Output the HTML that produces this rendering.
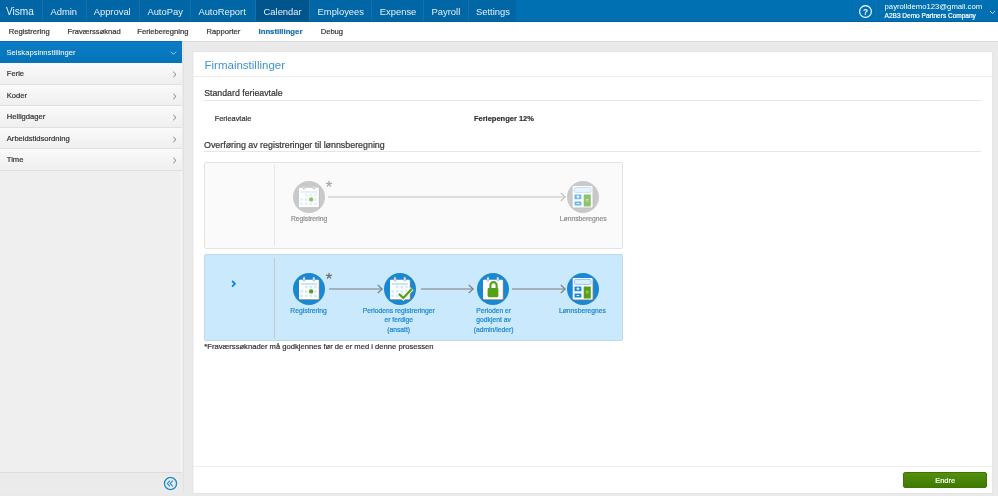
<!DOCTYPE html>
<html><head><meta charset="utf-8">
<style>
*{margin:0;padding:0;box-sizing:border-box}
html,body{width:998px;height:496px;overflow:hidden;background:#eaeaea;font-family:"Liberation Sans",sans-serif;position:relative}
.a{position:absolute;white-space:nowrap;line-height:1}
#top{position:absolute;left:0;top:0;width:998px;height:22px;background:#0070b3;border-bottom:1px solid #00619c}
.nv{position:absolute;top:6.8px;font-size:9.4px;color:#e6f0f8;line-height:1}
.dv{position:absolute;top:0;width:1px;height:21px;background:#1570ab}
#sub{position:absolute;left:0;top:22px;width:998px;height:20px;background:#fff;border-bottom:1px solid #dadada}
.sn{position:absolute;top:5.9px;font-size:7.6px;color:#333;line-height:1}
#side{position:absolute;left:0;top:41px;width:182px;height:452px;background:#efefef;border-right:1px solid #f8f8f8}
.row{position:absolute;left:0;width:182px;background:linear-gradient(#fafafa,#efefef);border-bottom:1px solid #e0e0e0}
.rt{position:absolute;left:6.8px;font-size:7.6px;color:#333;line-height:1}
#panel{position:absolute;left:193px;top:52px;width:799px;height:441px;background:#fff;border-left:1px solid #f4f4f4;box-shadow:0 0 1px rgba(0,0,0,0.12)}
.hl{position:absolute;height:1px;background:#e6e6e6}
.sn,.rt,.pt{-webkit-text-stroke-width:0.2px}
.lbl{position:absolute;font-size:6.75px;line-height:9.5px;text-align:center;white-space:nowrap}
</style></head><body>
<div id="root" style="position:absolute;left:0;top:0;width:998px;height:496px;overflow:hidden;will-change:transform">
<div id="top">
  <div class="a" style="left:0;top:0;width:516px;height:21px;background:#0066a6"></div>
  <div class="a" style="left:255.5px;top:0;width:54px;height:21px;background:#00558c"></div>
  <span class="nv" style="left:6px;top:7px;font-size:10.1px">Visma</span>
  <div class="dv" style="left:42px"></div>
  <span class="nv" style="left:50.5px">Admin</span>
  <div class="dv" style="left:86px"></div>
  <span class="nv" style="left:93.7px">Approval</span>
  <div class="dv" style="left:139px"></div>
  <span class="nv" style="left:147.4px">AutoPay</span>
  <div class="dv" style="left:190px"></div>
  <span class="nv" style="left:198.4px">AutoReport</span>
  <div class="dv" style="left:255px"></div>
  <span class="nv" style="left:263.6px">Calendar</span>
  <div class="dv" style="left:309px"></div>
  <span class="nv" style="left:317.6px">Employees</span>
  <div class="dv" style="left:371px"></div>
  <span class="nv" style="left:379.8px">Expense</span>
  <div class="dv" style="left:423px"></div>
  <span class="nv" style="left:431.6px">Payroll</span>
  <div class="dv" style="left:468px"></div>
  <span class="nv" style="left:476px">Settings</span>
  <div class="dv" style="left:854px"></div>
  <svg class="a" style="left:858px;top:3.7px" width="15" height="15" viewBox="0 0 15 15"><circle cx="7.5" cy="7.5" r="5.9" fill="none" stroke="#fff" stroke-width="1.15"/><text x="7.5" y="10.5" font-size="8.3" font-weight="bold" text-anchor="middle" fill="#fff" font-family="Liberation Sans">?</text></svg>
  <div class="dv" style="left:876px"></div>
  <span class="a" style="left:884.6px;top:3.3px;font-size:7.7px;color:#fff">payrolldemo123@gmail.com</span>
  <span class="a" style="left:884.6px;top:13px;font-size:6.52px;color:#fff;-webkit-text-stroke-width:0.2px">A2B3 Demo Partners Company</span>
  <svg class="a" style="left:989px;top:10px" width="7" height="5" viewBox="0 0 7 5"><path d="M1 1 L3.5 3.5 L6 1" fill="none" stroke="#dfeaf3" stroke-width="0.9"/></svg>
</div>
<div id="sub">
  <span class="sn" style="left:8.7px">Registrering</span>
  <span class="sn" style="left:67.6px">Fraværssøknad</span>
  <span class="sn" style="left:137.3px">Ferieberegning</span>
  <span class="sn" style="left:206.5px">Rapporter</span>
  <span class="sn" style="left:258.5px;font-weight:bold;color:#1a6fb0;font-size:7.75px">Innstillinger</span>
  <span class="sn" style="left:320.7px">Debug</span>
</div>
<div id="side">
  <div class="a" style="left:0;top:0;width:182px;height:22px;background:linear-gradient(#0a7dc6,#0673b9);border-top:1px solid #036fb5"></div>
  <span class="a" style="left:6.5px;top:7.6px;font-size:7.64px;color:#fff">Selskapsinnstillinger</span>
  <svg class="a" style="left:169px;top:8.5px" width="9" height="6" viewBox="0 0 9 6"><path d="M1.8 1.6 L4.5 4.3 L7.2 1.6" fill="none" stroke="#cfe3f3" stroke-width="0.8"/></svg>
  <div class="row" style="top:22px;height:21.5px"><span class="rt" style="top:7.4px">Ferie</span><svg class="a" style="left:171px;top:8px" width="7" height="7" viewBox="0 0 7 7"><path d="M2.2 0.8 L5 3.5 L2.2 6.2" fill="none" stroke="#666" stroke-width="0.8"/></svg></div>
  <div class="row" style="top:43.5px;height:21.5px"><span class="rt" style="top:7.4px">Koder</span><svg class="a" style="left:171px;top:8px" width="7" height="7" viewBox="0 0 7 7"><path d="M2.2 0.8 L5 3.5 L2.2 6.2" fill="none" stroke="#666" stroke-width="0.8"/></svg></div>
  <div class="row" style="top:65px;height:21.5px"><span class="rt" style="top:7.4px">Helligdager</span><svg class="a" style="left:171px;top:8px" width="7" height="7" viewBox="0 0 7 7"><path d="M2.2 0.8 L5 3.5 L2.2 6.2" fill="none" stroke="#666" stroke-width="0.8"/></svg></div>
  <div class="row" style="top:86.5px;height:21.5px"><span class="rt" style="top:7.4px">Arbeidstidsordning</span><svg class="a" style="left:171px;top:8px" width="7" height="7" viewBox="0 0 7 7"><path d="M2.2 0.8 L5 3.5 L2.2 6.2" fill="none" stroke="#666" stroke-width="0.8"/></svg></div>
  <div class="row" style="top:108px;height:21.5px"><span class="rt" style="top:7.4px">Time</span><svg class="a" style="left:171px;top:8px" width="7" height="7" viewBox="0 0 7 7"><path d="M2.2 0.8 L5 3.5 L2.2 6.2" fill="none" stroke="#666" stroke-width="0.8"/></svg></div>
  <div class="a" style="left:0;top:431px;width:182px;height:21px;background:#ebebeb;border-top:1px solid #dcdcdc"></div>
  <svg class="a" style="left:162px;top:434px" width="17" height="17" viewBox="0 0 17 17"><circle cx="8.5" cy="8.5" r="7.4" fill="none" stroke="#fdf3ea" stroke-width="1"/><circle cx="8.5" cy="8.5" r="6.1" fill="none" stroke="#1a8ad4" stroke-width="1.4"/><path d="M7.9 5.7 L5.4 8.5 L7.9 11.3 M10.8 5.7 L8.3 8.5 L10.8 11.3" fill="none" stroke="#1a8ad4" stroke-width="1.1"/></svg>
</div>
<div class="a" style="left:183px;top:42px;width:1px;height:451px;background:#e2e2e2"></div>
<div id="panel"></div>
<span class="a" style="left:204.5px;top:59.7px;font-size:11.5px;color:#3f92d2">Firmainstillinger</span>
<div class="hl" style="left:193px;top:76px;width:799px;background:#ececec"></div>
<span class="a pt" style="left:204.2px;top:89.2px;font-size:8.77px;color:#333">Standard ferieavtale</span>
<div class="hl" style="left:204px;top:100px;width:777px"></div>
<span class="a pt" style="left:214.7px;top:115.3px;font-size:7.4px;color:#333">Ferieavtale</span>
<span class="a pt" style="left:473.9px;top:114.9px;font-size:7.5px;color:#333;font-weight:bold">Feriepenger 12%</span>
<span class="a pt" style="left:204px;top:141.1px;font-size:8.87px;color:#333">Overføring av registreringer til lønnsberegning</span>
<div class="hl" style="left:204px;top:151px;width:777px"></div>
<!-- box 1 -->
<div class="a" style="left:204px;top:162px;width:418.5px;height:86.5px;background:#fafafa;border:1px solid #e3e3e3;border-radius:2px"></div>
<div class="a" style="left:274px;top:165px;width:1px;height:81px;background:#e6e6e6"></div>
<!-- box 2 -->
<div class="a" style="left:204px;top:254px;width:418.5px;height:87px;background:#cbe9fd;border:1px solid #c0d8e8;border-radius:2px"></div>
<div class="a" style="left:274px;top:257.5px;width:1px;height:81.5px;background:#bfc9cf"></div>
<svg class="a" style="left:230px;top:279px" width="7" height="10" viewBox="0 0 7 10"><path d="M2.1 1.9 L4.9 4.8 L2.1 7.7" fill="none" stroke="#0b7fd0" stroke-width="1.7"/></svg>
<svg class="a" style="left:293.2px;top:180.7px" width="32" height="32" viewBox="0 0 32 32"><circle cx="16" cy="16" r="16" fill="#c9c9c9"/><rect x="6.9" y="7.5" width="19.8" height="19.6" rx="0.6" fill="#bdbdbd"/><rect x="6" y="6.7" width="19.8" height="19.5" rx="0.6" fill="#fff"/><rect x="9.8" y="3.7" width="2.4" height="4.8" rx="1.2" fill="#bfbfbf"/><rect x="10.600000000000001" y="4.6" width="0.8" height="3.2" rx="0.4" fill="#fff"/><rect x="19.6" y="3.7" width="2.4" height="4.8" rx="1.2" fill="#bfbfbf"/><rect x="20.400000000000002" y="4.6" width="0.8" height="3.2" rx="0.4" fill="#fff"/><rect x="7.8" y="10.4" width="16.3" height="1.1" fill="#cce4f6"/><rect x="12.0" y="12.7" width="2.6" height="2.5" fill="#dfeffb"/><rect x="16.6" y="12.7" width="2.6" height="2.5" fill="#dfeffb"/><rect x="21.2" y="12.7" width="2.6" height="2.5" fill="#dfeffb"/><rect x="7.4" y="17.2" width="2.6" height="2.5" fill="#dfeffb"/><rect x="12.0" y="17.2" width="2.6" height="2.5" fill="#dfeffb"/><rect x="16.6" y="17.2" width="2.6" height="2.5" fill="#dfeffb"/><rect x="21.2" y="17.2" width="2.6" height="2.5" fill="#dfeffb"/><rect x="7.4" y="21.6" width="2.6" height="2.5" fill="#dfeffb"/><rect x="12.0" y="21.6" width="2.6" height="2.5" fill="#dfeffb"/><rect x="16.6" y="21.6" width="2.6" height="2.5" fill="#dfeffb"/><rect x="21.2" y="21.6" width="2.6" height="2.5" fill="#dfeffb"/><circle cx="18.1" cy="18.4" r="2.2" fill="#8dc46b"/></svg>
<svg class="a" style="left:567.3px;top:180.7px" width="32" height="32" viewBox="0 0 32 32"><circle cx="16" cy="16" r="16" fill="#c9c9c9"/><rect x="6.6" y="5.9" width="19.8" height="21.3" rx="0.8" fill="#bdbdbd"/><rect x="5.7" y="5.1" width="19.9" height="21.4" rx="0.8" fill="#fff"/><rect x="7.4" y="6.5" width="16.6" height="4.9" rx="1" fill="#e6f3fc" stroke="#b7dcf4" stroke-width="0.8"/><rect x="7.5" y="13.5" width="6.9" height="4.7" rx="0.5" fill="#6ab8ea"/><rect x="7.5" y="20.4" width="6.9" height="4.2" rx="0.5" fill="#6ab8ea"/><path d="M9.4 15.85 H12.5 M10.95 14.3 V17.4" stroke="#fff" stroke-width="1"/><path d="M9.6 22.5 H12.3" stroke="#fff" stroke-width="0.9"/><rect x="16.7" y="13.5" width="7.1" height="11.9" rx="0.5" fill="#8dc46b"/><path d="M18.7 18.4 H21.6 M18.7 20.0 H21.6" stroke="#d8ecc8" stroke-width="0.8"/></svg>
<svg class="a" style="left:324.1px;top:178.9px" width="10" height="10" viewBox="0 0 10 10"><path d="M5 5 L5.00 2.30 M5 5 L7.57 4.17 M5 5 L2.43 4.17 M5 5 L6.59 7.18 M5 5 L3.41 7.18 " stroke="#a5a5a5" stroke-width="1.25" stroke-linecap="round"/></svg>
<svg class="a" style="left:328px;top:191.5px" width="238" height="10" viewBox="0 0 238 10"><path d="M0 5 H237.3" stroke="#c2c2c2" stroke-width="1.1"/><path d="M232.8 1 L237.2 5 L232.8 9" fill="none" stroke="#c2c2c2" stroke-width="1.1"/></svg>
<div class="a pt" style="left:249.2px;width:120px;top:215.7px;font-size:6.75px;color:#8f8f8f;text-align:center">Registrering</div>
<div class="a pt" style="left:523.3px;width:120px;top:215.7px;font-size:6.75px;color:#8f8f8f;text-align:center">Lønnsberegnes</div>
<svg class="a" style="left:292.9px;top:272.6px" width="32" height="32" viewBox="0 0 32 32"><circle cx="16" cy="16" r="16" fill="#1a87d1"/><rect x="6.9" y="7.5" width="19.8" height="19.6" rx="0.6" fill="#8a8076"/><rect x="6" y="6.7" width="19.8" height="19.5" rx="0.6" fill="#fff"/><rect x="9.8" y="3.7" width="2.4" height="4.8" rx="1.2" fill="#a4bccd"/><rect x="10.600000000000001" y="4.6" width="0.8" height="3.2" rx="0.4" fill="#fff"/><rect x="19.6" y="3.7" width="2.4" height="4.8" rx="1.2" fill="#a4bccd"/><rect x="20.400000000000002" y="4.6" width="0.8" height="3.2" rx="0.4" fill="#fff"/><rect x="7.8" y="10.4" width="16.3" height="1.1" fill="#9fd0f0"/><rect x="12.0" y="12.7" width="2.6" height="2.5" fill="#d2e9f9"/><rect x="16.6" y="12.7" width="2.6" height="2.5" fill="#d2e9f9"/><rect x="21.2" y="12.7" width="2.6" height="2.5" fill="#d2e9f9"/><rect x="7.4" y="17.2" width="2.6" height="2.5" fill="#d2e9f9"/><rect x="12.0" y="17.2" width="2.6" height="2.5" fill="#d2e9f9"/><rect x="16.6" y="17.2" width="2.6" height="2.5" fill="#d2e9f9"/><rect x="21.2" y="17.2" width="2.6" height="2.5" fill="#d2e9f9"/><rect x="7.4" y="21.6" width="2.6" height="2.5" fill="#d2e9f9"/><rect x="12.0" y="21.6" width="2.6" height="2.5" fill="#d2e9f9"/><rect x="16.6" y="21.6" width="2.6" height="2.5" fill="#d2e9f9"/><rect x="21.2" y="21.6" width="2.6" height="2.5" fill="#d2e9f9"/><circle cx="18.1" cy="18.4" r="2.2" fill="#55a016"/></svg>
<svg class="a" style="left:384px;top:272.5px" width="32" height="32" viewBox="0 0 32 32"><circle cx="16" cy="16" r="16" fill="#1a87d1"/><rect x="6.9" y="7.5" width="19.8" height="19.6" rx="0.6" fill="#8a8076"/><rect x="6" y="6.7" width="19.8" height="19.5" rx="0.6" fill="#fff"/><rect x="9.8" y="3.7" width="2.4" height="4.8" rx="1.2" fill="#a4bccd"/><rect x="10.600000000000001" y="4.6" width="0.8" height="3.2" rx="0.4" fill="#fff"/><rect x="19.6" y="3.7" width="2.4" height="4.8" rx="1.2" fill="#a4bccd"/><rect x="20.400000000000002" y="4.6" width="0.8" height="3.2" rx="0.4" fill="#fff"/><rect x="7.8" y="10.4" width="16.3" height="1.1" fill="#9fd0f0"/><rect x="12.0" y="12.7" width="2.6" height="2.5" fill="#d2e9f9"/><rect x="16.6" y="12.7" width="2.6" height="2.5" fill="#d2e9f9"/><rect x="21.2" y="12.7" width="2.6" height="2.5" fill="#d2e9f9"/><rect x="7.4" y="17.2" width="2.6" height="2.5" fill="#d2e9f9"/><rect x="12.0" y="17.2" width="2.6" height="2.5" fill="#d2e9f9"/><rect x="16.6" y="17.2" width="2.6" height="2.5" fill="#d2e9f9"/><rect x="21.2" y="17.2" width="2.6" height="2.5" fill="#d2e9f9"/><rect x="7.4" y="21.6" width="2.6" height="2.5" fill="#d2e9f9"/><rect x="12.0" y="21.6" width="2.6" height="2.5" fill="#d2e9f9"/><rect x="16.6" y="21.6" width="2.6" height="2.5" fill="#d2e9f9"/><rect x="21.2" y="21.6" width="2.6" height="2.5" fill="#d2e9f9"/><path d="M14.7 20.7 L19.4 25.2 L28.1 15.6" fill="none" stroke="#fff" stroke-width="4" stroke-linejoin="miter" stroke-linecap="butt"/><path d="M14.9 20.9 L19.4 25.0 L27.9 15.8" fill="none" stroke="#55a016" stroke-width="2.3" stroke-linejoin="miter"/></svg>
<svg class="a" style="left:477.2px;top:272.5px" width="32" height="32" viewBox="0 0 32 32"><circle cx="16" cy="16" r="16" fill="#1a87d1"/><rect x="6.9" y="7.5" width="19.8" height="19.6" rx="0.6" fill="#8a8076"/><rect x="6" y="6.7" width="19.8" height="19.5" rx="0.6" fill="#fff"/><rect x="9.8" y="3.7" width="2.4" height="4.8" rx="1.2" fill="#a4bccd"/><rect x="10.600000000000001" y="4.6" width="0.8" height="3.2" rx="0.4" fill="#fff"/><rect x="19.6" y="3.7" width="2.4" height="4.8" rx="1.2" fill="#a4bccd"/><rect x="20.400000000000002" y="4.6" width="0.8" height="3.2" rx="0.4" fill="#fff"/><path d="M13.4 15.5 V12.2 A3.1 3.1 0 0 1 19.6 12.2 V15.5" fill="none" stroke="#55a016" stroke-width="2.1"/><rect x="10.6" y="15.0" width="10.8" height="9.2" rx="1.4" fill="#55a016"/></svg>
<svg class="a" style="left:567.3px;top:272.5px" width="32" height="32" viewBox="0 0 32 32"><circle cx="16" cy="16" r="16" fill="#1a87d1"/><rect x="6.6" y="5.9" width="19.8" height="21.3" rx="0.8" fill="#8a8076"/><rect x="5.7" y="5.1" width="19.9" height="21.4" rx="0.8" fill="#fff"/><rect x="7.4" y="6.5" width="16.6" height="4.9" rx="1" fill="#d6edfb" stroke="#7dbfea" stroke-width="0.8"/><rect x="7.5" y="13.5" width="6.9" height="4.7" rx="0.5" fill="#1a87d1"/><rect x="7.5" y="20.4" width="6.9" height="4.2" rx="0.5" fill="#1a87d1"/><path d="M9.4 15.85 H12.5 M10.95 14.3 V17.4" stroke="#fff" stroke-width="1"/><path d="M9.6 22.5 H12.3" stroke="#fff" stroke-width="0.9"/><rect x="16.7" y="13.5" width="7.1" height="11.9" rx="0.5" fill="#55a016"/><path d="M18.7 18.4 H21.6 M18.7 20.0 H21.6" stroke="#b5d98f" stroke-width="0.8"/></svg>
<svg class="a" style="left:324.0px;top:270.6px" width="10" height="10" viewBox="0 0 10 10"><path d="M5 5 L5.00 2.30 M5 5 L7.57 4.17 M5 5 L2.43 4.17 M5 5 L6.59 7.18 M5 5 L3.41 7.18 " stroke="#6a6a6a" stroke-width="1.25" stroke-linecap="round"/></svg>
<svg class="a" style="left:329px;top:283.5px" width="54" height="10" viewBox="0 0 54 10"><path d="M0 5 H53.3" stroke="#7d7d7d" stroke-width="1.1"/><path d="M48.8 1 L53.2 5 L48.8 9" fill="none" stroke="#7d7d7d" stroke-width="1.1"/></svg>
<svg class="a" style="left:421px;top:283.5px" width="53" height="10" viewBox="0 0 53 10"><path d="M0 5 H52.3" stroke="#7d7d7d" stroke-width="1.1"/><path d="M47.8 1 L52.2 5 L47.8 9" fill="none" stroke="#7d7d7d" stroke-width="1.1"/></svg>
<svg class="a" style="left:512px;top:283.5px" width="54" height="10" viewBox="0 0 54 10"><path d="M0 5 H53.3" stroke="#7d7d7d" stroke-width="1.1"/><path d="M48.8 1 L53.2 5 L48.8 9" fill="none" stroke="#7d7d7d" stroke-width="1.1"/></svg>
<div class="a pt" style="left:248.5px;width:120px;top:307.8px;font-size:6.75px;color:#1b87d0;text-align:center">Registrering</div>
<div class="a pt" style="left:338.7px;width:120px;top:307.8px;font-size:6.75px;color:#1b87d0;text-align:center">Periodens registreringer</div><div class="a pt" style="left:338.7px;width:120px;top:317.3px;font-size:6.75px;color:#1b87d0;text-align:center">er ferdige</div><div class="a pt" style="left:338.7px;width:120px;top:326.8px;font-size:6.75px;color:#1b87d0;text-align:center">(ansatt)</div>
<div class="a pt" style="left:433.6px;width:120px;top:307.8px;font-size:6.75px;color:#1b87d0;text-align:center">Perioden er</div><div class="a pt" style="left:433.6px;width:120px;top:317.3px;font-size:6.75px;color:#1b87d0;text-align:center">godkjent av</div><div class="a pt" style="left:433.6px;width:120px;top:326.8px;font-size:6.75px;color:#1b87d0;text-align:center">(admin/leder)</div>
<div class="a pt" style="left:522.4px;width:120px;top:307.8px;font-size:6.75px;color:#1b87d0;text-align:center">Lønnsberegnes</div>
<span class="a pt" style="left:204.3px;top:343.4px;font-size:7.63px;color:#333">*Fraværssøknader må godkjennes før de er med i denne prosessen</span>
<div class="hl" style="left:193px;top:466px;width:799px;background:#efefef"></div>
<div class="a" style="left:903px;top:472px;width:84px;height:16px;background:linear-gradient(#54900c,#3f7a02);border-radius:2px;border:1px solid #3d7503"></div>
<span class="a pt" style="left:935.3px;top:476.8px;font-size:7.4px;color:#fff">Endre</span>
</div>
</body></html>
